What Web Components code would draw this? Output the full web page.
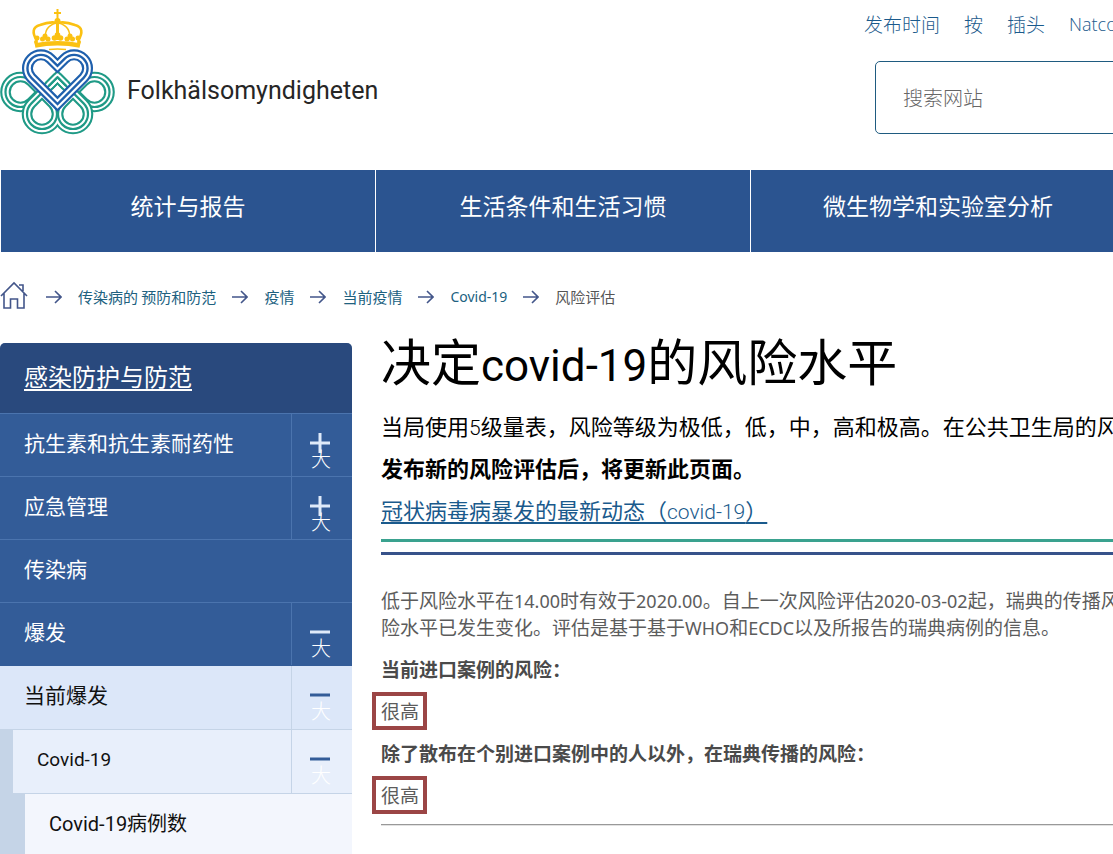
<!DOCTYPE html>
<html lang="zh-CN">
<head>
<meta charset="utf-8">
<meta name="viewport" content="width=device-width, initial-scale=1">
<title>决定covid-19的风险水平</title>
<style>
  html { overflow-x: hidden; }
  body {
    margin: 0;
    overflow-x: hidden;
    background: #fff;
    color: #000;
    font-family: "Noto Sans CJK SC", "Noto Sans", sans-serif;
    --navy: #2b5490;
    --link: #1a5a8c;
  }
</style>
</head>
<body>
<fhm-page></fhm-page>

<script>
const define = (name, html) => {
  const template = document.createElement('template');
  template.innerHTML = html;
  customElements.define(name, class extends HTMLElement {
    constructor() {
      super();
      this.attachShadow({ mode: 'open' }).append(template.content.cloneNode(true));
    }
  });
};

define('fhm-logo', `
<style>
  :host { display: block; }
  a { display: flex; align-items: flex-start; gap: 12px; color: #262626; text-decoration: none; }
  svg { display: block; flex: none; }
  span { padding-top: 75px; font: 400 25px/32px Roboto, sans-serif; }
</style>
<a href="#">
  <svg width="115" height="136" viewBox="0 0 115 136" fill="none" aria-hidden="true">
    <defs>
      <g id="sides">
        <path d="M46 96.300L31.100 81.400A15 15 0 1 0 31.100 102.600L46 87.700"/>
        <path d="M69 96.300L83.900 81.400A15 15 0 1 1 83.900 102.600L69 87.700"/>
      </g>
      <g id="lobes">
        <path d="M57.500 77.300L31.400 103.400A15 15 0 1 0 52.600 103.400L40 90.800"/>
        <path d="M57.500 77.300L83.600 103.400A15 15 0 1 1 62.400 103.400L75 90.800"/>
        <path d="M49 85.800L57.500 77.300L66 85.800"/>
      </g>
      <path id="heart" d="M57.500 104L31.400 77.900A13.500 13.500 0 0 1 50.500 58.800L57.500 65.800L64.500 58.800A13.500 13.500 0 0 1 83.600 77.900Z"/>
    </defs>
    <g stroke="#1f9a86">
      <use href="#sides" stroke-width="10.600"/>
      <use href="#sides" stroke="#fff" stroke-width="6.400"/>
      <use href="#sides" stroke-width="2.200"/>
      <use href="#lobes" stroke-width="10.600"/>
      <use href="#lobes" stroke="#fff" stroke-width="6.400"/>
      <use href="#lobes" stroke-width="2.200"/>
    </g>
    <g stroke="#1f60ad">
      <use href="#heart" stroke-width="11"/>
      <use href="#heart" stroke="#fff" stroke-width="6.600"/>
      <use href="#heart" stroke-width="2.400"/>
    </g>
    <g stroke="#fbc112" stroke-width="2">
      <path d="M57.500 9V20M54 13H61"/>
      <path d="M37 41Q29 28 40 25Q50 21 57.500 23Q65 21 75 25Q86 28 78 41" stroke-width="2.600"/>
      <path d="M46 40Q43 27 56 23M69 40Q72 27 59 23" stroke-width="1.400"/>
      <path d="M57.500 23V40" stroke-width="3"/>
      <path d="M35 45.500Q57.500 41 80 45.500" stroke-width="4.600"/>
      <path d="M49 49.500Q57.500 48.500 66 49.500" stroke-width="1.400"/>
    </g>
    <g fill="#fbc112">
      <circle cx="57.500" cy="21" r="3"/>
      <circle cx="57.500" cy="35" r="2.800"/><circle cx="54.500" cy="38" r="2.800"/><circle cx="60.500" cy="38" r="2.800"/>
      <circle cx="45" cy="36" r="2.500"/><circle cx="42.500" cy="39" r="2.500"/><circle cx="48" cy="39" r="2.500"/>
      <circle cx="70" cy="36" r="2.500"/><circle cx="67" cy="39" r="2.500"/><circle cx="72.500" cy="39" r="2.500"/>
      <circle cx="37" cy="38" r="2.500"/><circle cx="78" cy="38" r="2.500"/>
      <circle cx="36" cy="42" r="2"/><circle cx="79" cy="42" r="2"/>
    </g>
  </svg>
  <span>Folkhälsomyndigheten</span>
</a>`);

define('fhm-header', `
<style>
  :host { display: flex; justify-content: space-between; box-sizing: border-box; height: 170px; overflow: hidden; }
  .tools { width: 249px; }
  nav { display: flex; gap: 24px; padding-top: 10px; white-space: nowrap; }
  nav a { font-size: 19px; line-height: 28px; color: var(--link); text-decoration: none; font-weight: 300; }
  nav a:last-child { font-family: "Open Sans", sans-serif; font-size: 18px; }
  input { box-sizing: border-box; display: block; width: 300px; height: 73px; margin: 23px 0 0 11px; padding: 0 27px;
    border: 1px solid #1f5b80; border-radius: 5px; background: #fff; color: #333; font: 300 20px/28px "Noto Sans CJK SC", sans-serif; outline: none; }
  input::placeholder { color: #666; opacity: 1; }
</style>
<fhm-logo></fhm-logo>
<div class="tools">
  <nav><a href="#">发布时间</a><a href="#">按</a><a href="#">插头</a><a href="#">Natco</a></nav>
  <input type="text" aria-label="搜索网站" placeholder="搜索网站">
</div>`);

define('fhm-nav', `
<style>
  :host { display: block; overflow: hidden; }
  nav { display: flex; }
  ::slotted(a) { flex: 1 0 374px; height: 82px; box-sizing: border-box; padding-top: 18px; margin-left: 1px;
    background: var(--navy); color: #fff; text-align: center; text-decoration: none; font-size: 23px; line-height: 34px; }
</style>
<nav><slot></slot></nav>`);

define('fhm-arrow', `
<style>:host { display: block; flex: none; } svg { display: block; }</style>
<svg width="16" height="16" viewBox="0 0 16 16" fill="none" stroke="#43568a" stroke-width="1.600" aria-hidden="true"><path d="M0 8H15M9 2L15 8L9 14"/></svg>`);

define('fhm-breadcrumb', `
<style>
  :host { display: block; padding-top: 29px; }
  nav { display: flex; align-items: center; gap: 16px; height: 32px; white-space: nowrap; font-size: 15px; line-height: 24px; }
  a { color: #20617f; text-decoration: none; }
  svg { display: block; }
  .home { margin-right: 2px; padding-bottom: 4px; }
  span { color: #555; }
  .en { font-family: "Noto Sans", sans-serif; font-size: 14px; }
</style>
<nav aria-label="breadcrumb">
  <a class="home" href="#" aria-label="Start"><svg width="28" height="28" viewBox="0 0 28 28" fill="none" stroke="#43568a" stroke-width="1.600"><path d="M1 15L14 2L27 15M4 12.500V27H10.500V18H17.500V27H24V12.500M19 4H23V10"/></svg></a>
  <fhm-arrow></fhm-arrow><a href="#">传染病的 预防和防范</a>
  <fhm-arrow></fhm-arrow><a href="#">疫情</a>
  <fhm-arrow></fhm-arrow><a href="#">当前疫情</a>
  <fhm-arrow></fhm-arrow><a class="en" href="#">Covid-19</a>
  <fhm-arrow></fhm-arrow><span>风险评估</span>
</nav>`);

define('fhm-toggle', `
<style>
  :host { display: block; flex: none; width: 60px; border-left: 1px solid var(--line); color: var(--icon); }
  button { display: flex; flex-direction: column; align-items: flex-start; width: 100%; height: 100%; margin: 0; padding: 19px 0 0 18px;
    border: 0; background: none; color: inherit; cursor: pointer; }
  svg { display: block; }
  span { margin: -4px 0 0 1px; color: #fff; font: 300 20px/20px "Noto Sans CJK SC", sans-serif; }
  .v { display: var(--plus, none); }
</style>
<button type="button"><svg width="20" height="20" viewBox="0 0 20 20" stroke="currentColor" stroke-width="3" aria-hidden="true"><path d="M0 10H20"/><path class="v" d="M10 0V20"/></svg><span>大</span></button>`);

define('fhm-menu-item', `
<style>
  :host { display: flex; box-sizing: border-box; height: 63px; border-top: 1px solid var(--line);
    --line: #4b74ae; --icon: #dfeaf9; background: #335c98; color: #fff; }
  :host([closed]) { --plus: inline; }
  :host([level]) { height: 64px; --line: #c5d4e7; --icon: #335c98; color: #111; }
  :host([level="1"]) { background: #dce7f9; border-top-color: #335c98; }
  :host([level="2"]) { margin-left: 13px; background: #e8effb; }
  :host([level="3"]) { margin-left: 25px; background: #f3f6fd; }
  a { flex: 1; padding: 12px 0 0 24px; color: inherit; font-size: 21px; line-height: 32px; text-decoration: none; }
  :host([level="2"]) a, :host([level="3"]) a { padding-top: 14px; font-family: Roboto, "Noto Sans CJK SC", sans-serif; font-size: 20px; }
  :host([level="2"]) a { font-size: 19px; }
</style>
<a href="#"><slot></slot></a><slot name="toggle"></slot>`);

define('fhm-sidebar', `
<style>
  :host { display: block; align-self: stretch; border-radius: 5px 5px 0 0; overflow: hidden; background: #c5d4e7; }
  h2 { margin: 0; height: 70px; box-sizing: border-box; padding: 15px 24px; background: #29497d; font-weight: 400; font-size: 24px; line-height: 36px; }
  h2 a { color: #fff; text-underline-offset: 3px; text-decoration-thickness: 2px; }
</style>
<h2><a href="#">感染防护与防范</a></h2>
<fhm-menu-item closed>抗生素和抗生素耐药性<fhm-toggle slot="toggle"></fhm-toggle></fhm-menu-item>
<fhm-menu-item closed>应急管理<fhm-toggle slot="toggle"></fhm-toggle></fhm-menu-item>
<fhm-menu-item>传染病</fhm-menu-item>
<fhm-menu-item>爆发<fhm-toggle slot="toggle"></fhm-toggle></fhm-menu-item>
<fhm-menu-item level="1">当前爆发<fhm-toggle slot="toggle"></fhm-toggle></fhm-menu-item>
<fhm-menu-item level="2">Covid-19<fhm-toggle slot="toggle"></fhm-toggle></fhm-menu-item>
<fhm-menu-item level="3">Covid-19病例数</fhm-menu-item>`);

define('fhm-level', `
<style>
  :host { display: block; width: max-content; margin-left: -9px; padding: 0 4px 0 5px; border: 4px solid #9b4545; color: #5c5c5c; font-size: 19px; line-height: 30px; }
</style>
<slot></slot>`);

define('fhm-article', `
<style>
  :host { display: block; min-width: 0; }
  h1 { margin: 0 0 15px; font-weight: 400; font-size: 50px; line-height: 60px; white-space: nowrap; }
  h1 span { font-family: Roboto, sans-serif; font-size: 44px; line-height: 1; }
  .lead { margin: 0; height: 42px; font-size: 22px; line-height: 42px; white-space: nowrap; }
  .lead strong { font-size: 22px; }
  .lead span { font-family: Roboto, sans-serif; font-weight: 300; font-size: 21px; line-height: 1; }
  .lead a { color: var(--link); text-underline-offset: 3px; text-decoration-thickness: 2px; }
  .bars { height: 10px; margin: 9px 0 31px; border-top: 3px solid #3aa28f; border-bottom: 3px solid #37528a; }
  .body { margin: 0 0 16px; color: #5c5c5c; font-size: 19px; line-height: 27px; white-space: nowrap; }
  .body span { font-family: "Noto Sans", sans-serif; font-size: 18px; line-height: 1; }
  .risks { display: flex; flex-direction: column; gap: 10px; color: #4a4a4a; }
  strong { font-size: 19px; line-height: 26px; }
  hr { width: 100%; box-sizing: border-box; margin: 0; border: 0; border-top: 1px solid #999; border-bottom: 1px solid #e2e2e2; }
</style>
<h1>决定<span>covid-19</span>的风险水平</h1>
<p class="lead">当局使用<span>5</span>级量表，风险等级为极低，低，中，高和极高。在公共卫生局的风</p>
<p class="lead"><strong>发布新的风险评估后，将更新此页面。</strong></p>
<p class="lead"><a href="#">冠状病毒病暴发的最新动态（<span>covid-19</span>）</a></p>
<div class="bars"></div>
<p class="body">低于风险水平在<span>14.00</span>时有效于<span>2020.00</span>。自上一次风险评估<span>2020-03-02</span>起，瑞典的传播风<br>险水平已发生变化。评估是基于基于<span>WHO</span>和<span>ECDC</span>以及所报告的瑞典病例的信息。</p>
<div class="risks">
  <strong>当前进口案例的风险：</strong>
  <fhm-level>很高</fhm-level>
  <strong>除了散布在个别进口案例中的人以外，在瑞典传播的风险：</strong>
  <fhm-level>很高</fhm-level>
  <hr>
</div>`);

define('fhm-page', `
<style>
  :host { display: block; overflow-x: hidden; }
  main { display: grid; grid-template-columns: 352px minmax(0, 1fr); column-gap: 29px; padding-top: 16px; }
  fhm-sidebar { margin-top: 14px; }
</style>
<fhm-header></fhm-header>
<fhm-nav><a href="#">统计与报告</a><a href="#">生活条件和生活习惯</a><a href="#">微生物学和实验室分析</a></fhm-nav>
<fhm-breadcrumb></fhm-breadcrumb>
<main><fhm-sidebar></fhm-sidebar><fhm-article></fhm-article></main>`);
</script>
</body>
</html>
